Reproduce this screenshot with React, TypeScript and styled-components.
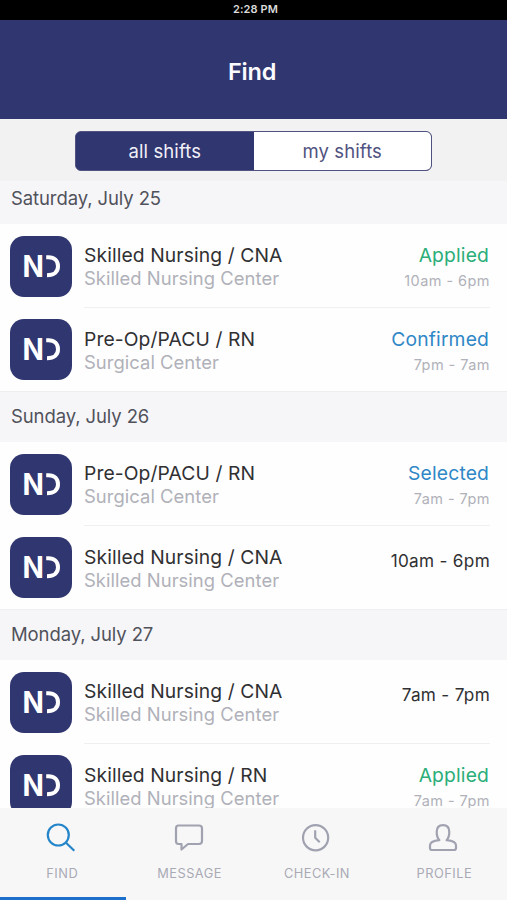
import React from "react";
import styled, { createGlobalStyle } from "styled-components";

const NAVY = "#30366f";

const GlobalStyle = createGlobalStyle`
  * { box-sizing: border-box; }
  body { margin: 0; background: #fff; font-family: Inter, Roboto, sans-serif; }
`;

const Screen = styled.div`
  display: flex;
  flex-direction: column;
  width: 507px;
  height: 900px;
  overflow: hidden;
  background: #fefefe;
`;

const StatusBar = styled.div`
  flex: none;
  height: 20px;
  padding-left: 4px;
  background: #000;
  color: #dcdcdc;
  font-size: 11px;
  font-weight: 600;
  line-height: 19px;
  letter-spacing: 0.1px;
  text-align: center;
`;

const Header = styled.header`
  flex: none;
  height: 99px;
  padding-right: 3px;
  background: ${NAVY};
  color: #fafaff;
  font-size: 23.5px;
  font-weight: 600;
  line-height: 103px;
  letter-spacing: -0.2px;
  text-align: center;
`;

const FilterBar = styled.div`
  flex: none;
  display: flex;
  justify-content: center;
  height: 62px;
  padding: 12px 0 0 0;
  background: #f2f2f3;
`;

const Segments = styled.div`
  display: flex;
  width: 357px;
  height: 40px;
  border: 1px solid #50527f;
  border-radius: 6px;
  overflow: hidden;
  background: ${NAVY};
`;

const Segment = styled.button<{ $active?: boolean }>`
  flex: 1;
  padding: 0;
  border: 0;
  background: ${(p) => (p.$active ? NAVY : "#fff")};
  color: ${(p) => (p.$active ? "#f0f0f8" : "#50527f")};
  font: 400 18.5px/38px Inter, sans-serif;
  letter-spacing: 0.1px;
`;

const Shifts = styled.main`
  flex: 1;
  min-height: 0;
  overflow: hidden;
`;

const DayHeading = styled.h2<{ $first?: boolean }>`
  margin: 0;
  height: ${(p) => (p.$first ? 43 : 51)}px;
  padding-left: 11px;
  border-top: ${(p) => (p.$first ? "0" : "1px solid #eeeef0")};
  background: #f6f6f9;
  color: #51525b;
  font-size: 18.5px;
  font-weight: 400;
  line-height: ${(p) => (p.$first ? 35 : 49)}px;
  letter-spacing: -0.1px;
`;

const Row = styled.div`
  display: flex;
  height: 83.5px;
  padding: 0 17px 0 10px;
`;

const LogoTile = styled.div`
  flex: none;
  width: 62px;
  height: 61px;
  margin: 11.5px 12px 0 0;
  border-radius: 14px;
  background: ${NAVY};
`;

const LogoSvg = styled.svg`
  display: block;
`;

const RowBody = styled.div<{ $divided: boolean }>`
  flex: 1;
  display: flex;
  justify-content: space-between;
  height: 84px;
  padding-top: 20px;
  border-bottom: 1px solid ${(p) => (p.$divided ? "#f0f0f2" : "transparent")};
  white-space: nowrap;
`;

const Role = styled.div`
  color: #303033;
  font-size: 19.3px;
  line-height: 23px;
  letter-spacing: 0.1px;
`;

const Place = styled.div`
  color: #b0b1b9;
  font-size: 18.4px;
  line-height: 22px;
  letter-spacing: 0.05px;
`;

const Aside = styled.div`
  text-align: right;
`;

const Status = styled.div<{ $color: string }>`
  margin-right: 1px;
  color: ${(p) => p.$color};
  font-size: 19.3px;
  line-height: 23px;
  letter-spacing: 0.15px;
`;

const Hours = styled.div<{ $main?: boolean }>`
  margin-top: ${(p) => (p.$main ? 3 : 2)}px;
  color: ${(p) => (p.$main ? "#303033" : "#b0b1b9")};
  font-size: ${(p) => (p.$main ? 17.2 : 14.5)}px;
  line-height: 24px;
  letter-spacing: ${(p) => (p.$main ? 0.3 : 0.45)}px;
`;

const TabBar = styled.nav`
  flex: none;
  height: 92px;
  display: grid;
  grid-template-columns: repeat(4, 127.4px);
  margin-right: -3px;
  background: #f7f7f8;
`;

const Tab = styled.div<{ $active?: boolean }>`
  display: flex;
  flex-direction: column;
  align-items: center;
  height: 92px;
  padding-top: 14px;
  color: ${(p) => (p.$active ? "#2585c9" : "#a1a2b0")};
`;

const TabLabel = styled.span`
  margin-top: 12px;
  padding-right: 3px;
  color: #a9aab4;
  font-size: 12.8px;
  line-height: 16px;
  letter-spacing: 0.5px;
`;

const Indicator = styled.div`
  align-self: flex-start;
  width: 126px;
  height: 3px;
  margin-top: auto;
  background: #1c70cb;
`;

const TabSvg = styled.svg`
  display: block;
  margin-right: 5px;
  flex: none;
`;

const icons: Record<string, React.ReactNode> = {
  FIND: (
    <>
      <circle cx="13.3" cy="13" r="10.5" />
      <path d="M21 20.7L29.3 28.7" />
    </>
  ),
  MESSAGE: (
    <path d="M5.5 3.5H26Q29 3.5 29 6.5V19Q29 22 26 22H15L8.5 27.5V22H5.5Q3 22 3 19V6.5Q3 3.5 5.5 3.5Z" />
  ),
  "CHECK-IN": (
    <>
      <circle cx="15.6" cy="15.7" r="12.6" />
      <path d="M15.2 8.2V15.7L19.7 20.2" />
    </>
  ),
  PROFILE: (
    <path d="M12.4 18.2C10.2 16 9.7 13.5 9.7 10C9.7 5.6 12.1 3.2 16 3.2S22.3 5.6 22.3 10C22.3 13.5 21.8 16 19.6 18.2C24.5 18.6 29 20 29 23.5V26Q29 28 27 28H5Q3 28 3 26V23.5C3 20 7.5 18.6 12.4 18.2Z" />
  ),
};

const Logo = () => (
  <LogoTile>
    <LogoSvg width="62" height="61" viewBox="0 0 62 61">
      <text x="12.6" y="41.2" fill="#fff" fontFamily="Inter" fontSize="30.3" fontWeight="700" textLength="21.4" lengthAdjust="spacingAndGlyphs">N</text>
      <path d="M36.2 21.2H38.5C44.5 21.2 48 25 48 30.2S44.5 39.2 37 39.2" fill="none" stroke="#fff" strokeWidth="4" />
    </LogoSvg>
  </LogoTile>
);

interface Shift {
  role: string;
  place: string;
  hours: string;
  status?: string;
}

const cna = { role: "Skilled Nursing / CNA", place: "Skilled Nursing Center" };
const preOp = { role: "Pre-Op/PACU / RN", place: "Surgical Center" };

const days: { date: string; shifts: Shift[] }[] = [
  {
    date: "Saturday, July 25",
    shifts: [
      { ...cna, status: "Applied", hours: "10am - 6pm" },
      { ...preOp, status: "Confirmed", hours: "7pm - 7am" },
    ],
  },
  {
    date: "Sunday, July 26",
    shifts: [
      { ...preOp, status: "Selected", hours: "7am - 7pm" },
      { ...cna, hours: "10am - 6pm" },
    ],
  },
  {
    date: "Monday, July 27",
    shifts: [
      { ...cna, hours: "7am - 7pm" },
      { role: "Skilled Nursing / RN", place: "Skilled Nursing Center", status: "Applied", hours: "7am - 7pm" },
    ],
  },
];

export default function App() {
  return (
    <Screen>
      <GlobalStyle />
      <StatusBar>2:28 PM</StatusBar>
      <Header>Find</Header>
      <FilterBar>
        <Segments>
          <Segment $active>all shifts</Segment>
          <Segment>my shifts</Segment>
        </Segments>
      </FilterBar>
      <Shifts>
        {days.map((day, d) => (
          <section key={day.date}>
            <DayHeading $first={d === 0}>{day.date}</DayHeading>
            {day.shifts.map((s, i) => (
              <Row key={i}>
                <Logo />
                <RowBody $divided={i === 0}>
                  <div>
                    <Role>{s.role}</Role>
                    <Place>{s.place}</Place>
                  </div>
                  <Aside>
                    {s.status && <Status $color={s.status === "Applied" ? "#2bae79" : "#2f87c6"}>{s.status}</Status>}
                    <Hours $main={!s.status}>{s.hours}</Hours>
                  </Aside>
                </RowBody>
              </Row>
            ))}
          </section>
        ))}
      </Shifts>
      <TabBar>
        {["FIND", "MESSAGE", "CHECK-IN", "PROFILE"].map((name) => (
          <Tab key={name} $active={name === "FIND"}>
            <TabSvg width="32" height="32" viewBox="0 0 32 32" fill="none" stroke="currentColor" strokeWidth="2.2" strokeLinejoin="round">
              {icons[name]}
            </TabSvg>
            <TabLabel>{name}</TabLabel>
            {name === "FIND" && <Indicator />}
          </Tab>
        ))}
      </TabBar>
    </Screen>
  );
}
